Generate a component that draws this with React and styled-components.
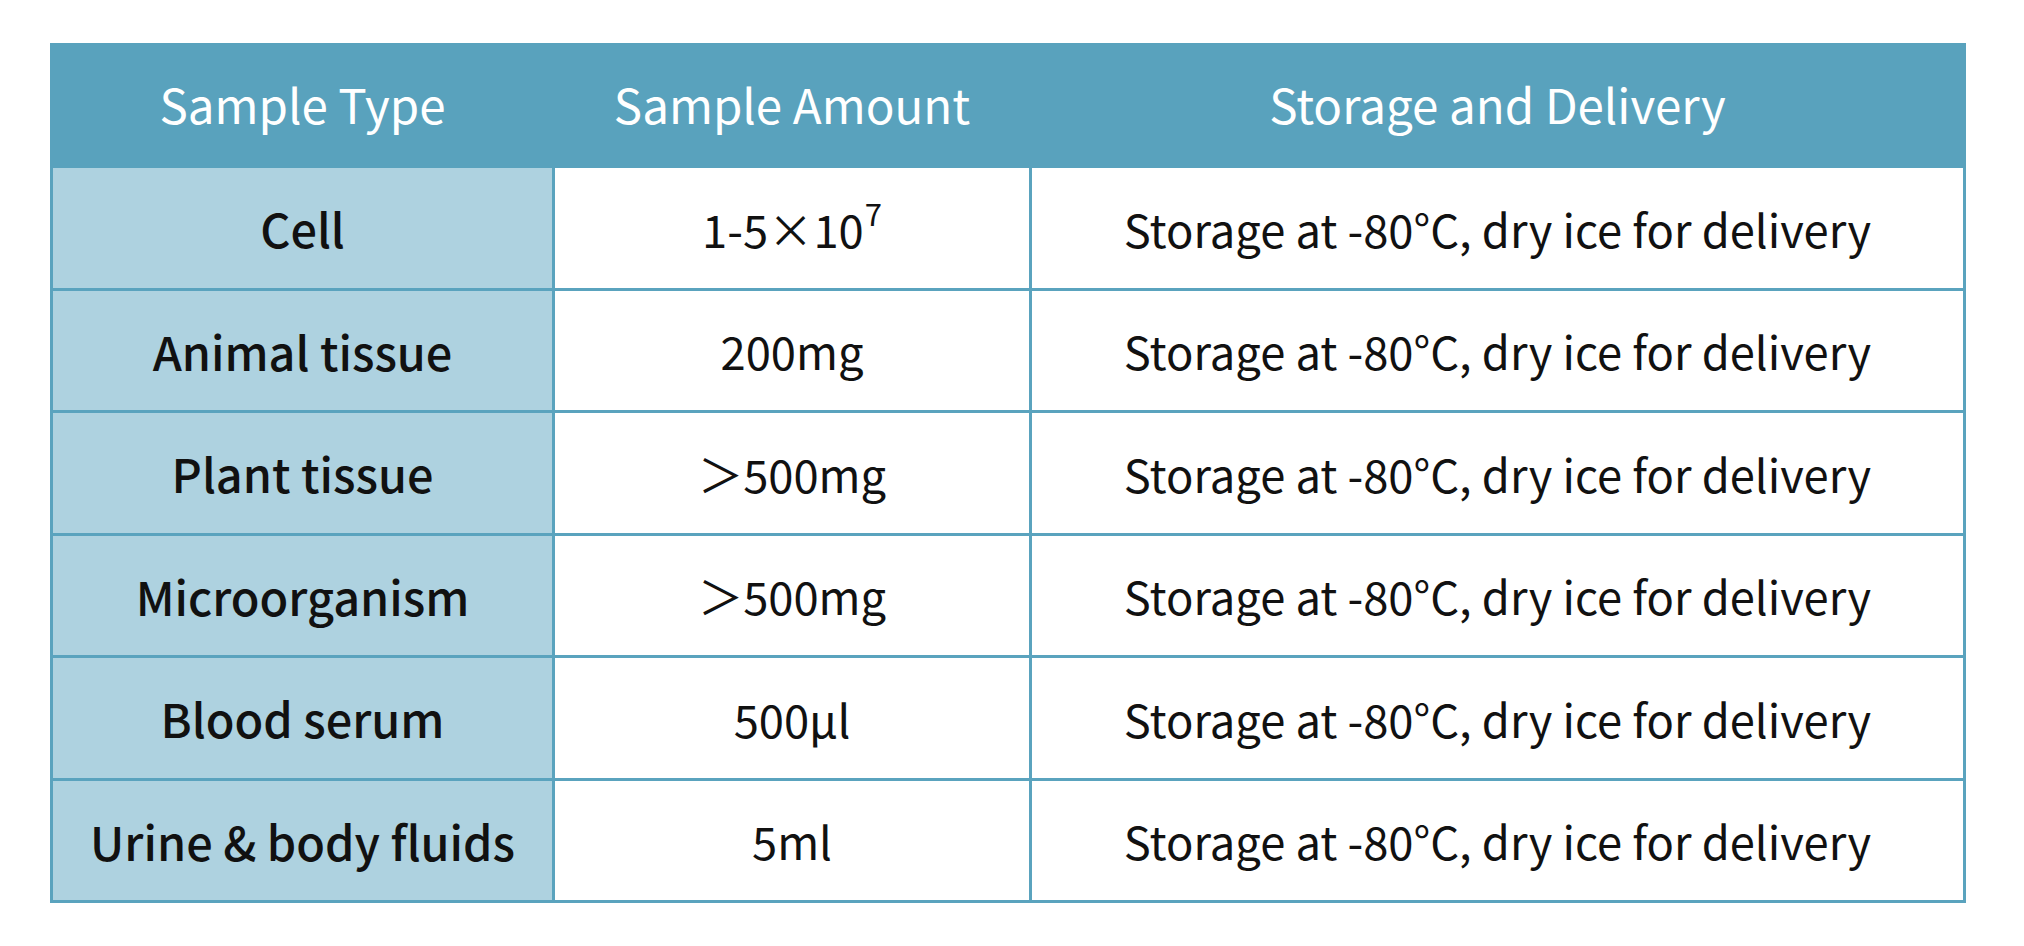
import React from "react";
import styled, { createGlobalStyle } from "styled-components";

const Global = createGlobalStyle`
  html, body { margin: 0; padding: 0; background: #ffffff; }
  body { font-family: "Noto Sans CJK SC", "Noto Sans", sans-serif; }
`;

const BORDER = "#5aa3be";
const HEADER = "#59a2bd";
const FIRST = "#aed2e0";
const COLS = "499px 474px 931px";

const Page = styled.div`
  padding: 43px 58px 0 50px;
`;

const Table = styled.div`
  width: 1916px;
  box-sizing: border-box;
  display: flex;
  flex-direction: column;
`;

const HeaderRow = styled.div`
  display: grid;
  grid-template-columns: ${COLS};
  column-gap: 3px;
  height: 125px;
  padding: 0 3px;
  background: ${HEADER};
`;

const HeaderCell = styled.div`
  display: flex;
  align-items: center;
  justify-content: center;
  color: #ffffff;
  font-size: 47.5px;
  font-weight: 400;
  padding-bottom: 4px;
`;

const Body = styled.div`
  display: grid;
  grid-template-columns: ${COLS};
  grid-auto-rows: 119.5px;
  gap: 3px;
  background: ${BORDER};
  border: 3px solid ${BORDER};
  border-top: none;
`;

const Cell = styled.div`
  display: flex;
  align-items: center;
  justify-content: center;
  background: ${(p) => (p.$first ? FIRST : "#ffffff")};
  color: #111111;
  font-size: ${(p) => (p.$first ? "46.8px" : "45.3px")};
  font-weight: ${(p) => (p.$first ? 500 : 400)};
  white-space: nowrap;
`;

const Sup = styled.span`
  font-size: 31px;
  line-height: 0;
  position: relative;
  top: -15px;
  margin-left: 1px;
  vertical-align: baseline;
`;

const rows = [
  ["Cell", <>1-5×10<Sup>7</Sup></>],
  ["Animal tissue", "200mg"],
  ["Plant tissue", "＞500mg"],
  ["Microorganism", "＞500mg"],
  ["Blood serum", "500μl"],
  ["Urine & body fluids", "5ml"],
];

export default function App() {
  return (
    <>
      <Global />
      <Page>
        <Table>
          <HeaderRow>
            <HeaderCell>Sample Type</HeaderCell>
            <HeaderCell>Sample Amount</HeaderCell>
            <HeaderCell>Storage and Delivery</HeaderCell>
          </HeaderRow>
          <Body>
            {rows.map(([type, amount], i) => (
              <React.Fragment key={i}>
                <Cell $first>{type}</Cell>
                <Cell>{amount}</Cell>
                <Cell>Storage at -80°C, dry ice for delivery</Cell>
              </React.Fragment>
            ))}
          </Body>
        </Table>
      </Page>
    </>
  );
}
